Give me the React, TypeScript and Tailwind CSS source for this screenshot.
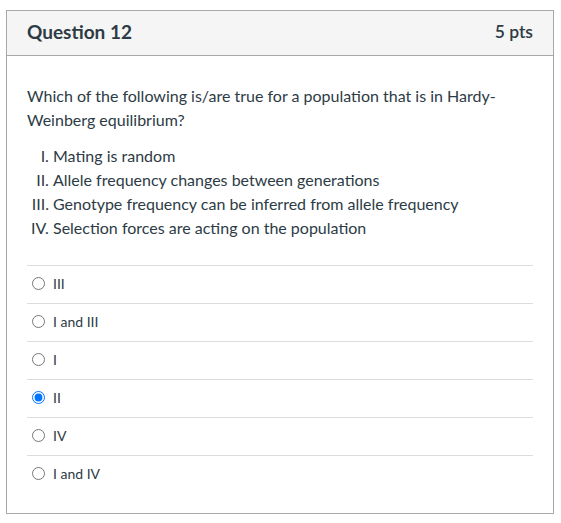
const answers = [
  { id: "a1", label: "III", checked: false },
  { id: "a2", label: "I and III", checked: false },
  { id: "a3", label: "I", checked: false },
  { id: "a4", label: "II", checked: true },
  { id: "a5", label: "IV", checked: false },
  { id: "a6", label: "I and IV", checked: false },
];

export default function App() {
  return (
    <div className="min-h-[523px] bg-white pt-[10px] pl-[6px] font-['Lato','Liberation_Sans',sans-serif] text-[#2d3b45]">
      <div className="w-[548px] border border-[#a8a8a8]">
        <div className="flex h-[45px] items-center justify-between border-b border-[#a8a8a8] bg-[#f5f5f5] px-5 pb-[2px]">
          <h2 className="text-[19px] font-bold">Question 12</h2>
          <span className="text-[17.5px] font-semibold">5 pts</span>
        </div>

        <div className="px-5 pt-[28px] pb-5">
          <p className="text-[16px] leading-6">
            Which of the following is/are true for a population that is in Hardy-Weinberg equilibrium?
          </p>
          <ol className="mt-3 list-[upper-roman] pl-[26px] text-[16px] leading-6">
            <li>Mating is random</li>
            <li>Allele frequency changes between generations</li>
            <li>Genotype frequency can be inferred from allele frequency</li>
            <li>Selection forces are acting on the population</li>
          </ol>

          <div className="mt-[25px]">
            {answers.map((a) => (
              <label
                key={a.id}
                className="flex h-[38px] items-center border-t border-[#dcdcdc] pb-[2px] text-[14px]"
              >
                <input
                  type="radio"
                  name="q12"
                  defaultChecked={a.checked}
                  className="ml-[5px] mr-[8px] h-[13px] w-[13px]"
                />
                <span>{a.label}</span>
              </label>
            ))}
          </div>
        </div>
      </div>
    </div>
  );
}
